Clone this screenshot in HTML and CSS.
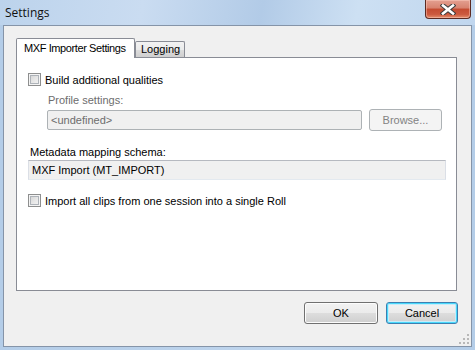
FILE: index.html
```html
<!DOCTYPE html>
<html lang="en">

<head>
    <meta charset="UTF-8">
    <title>Settings</title>
    <link rel="stylesheet" href="styles.css">
</head>

<body>
    <div class="window">
        <div class="titlebar">
            <span class="title">Settings</span>
            <button class="close" title="Close">
                <svg width="16" height="11" viewBox="0 0 16 11">
                    <path d="M3 1.5 L13 9.5 M13 1.5 L3 9.5" stroke="#3b3b3b" stroke-width="4.6" stroke-linecap="square" fill="none"/>
                    <path d="M3 1.5 L13 9.5 M13 1.5 L3 9.5" stroke="#fff" stroke-width="2.6" stroke-linecap="square" fill="none"/>
                </svg>
            </button>
        </div>
        <div class="client">
            <div class="tabs">
                <div class="tab active">MXF Importer Settings</div>
                <div class="tab">Logging</div>
            </div>
            <div class="panel">
                <label class="check">
                    <input type="checkbox">
                    <span>Build additional qualities</span>
                </label>
                <div class="label muted indent">Profile settings:</div>
                <div class="profile_row">
                    <div class="textbox disabled">&lt;undefined&gt;</div>
                    <button class="btn" disabled>Browse...</button>
                </div>
                <div class="label schema_label">Metadata mapping schema:</div>
                <div class="textbox readonly">MXF Import (MT_IMPORT)</div>
                <label class="check check_roll">
                    <input type="checkbox">
                    <span>Import all clips from one session into a single Roll</span>
                </label>
            </div>
            <div class="actions">
                <button class="btn ok">OK</button>
                <button class="btn cancel">Cancel</button>
            </div>
            <svg class="grip" width="10" height="10" viewBox="0 0 10 10">
                <g fill="#b8b8b8">
                    <rect x="8" y="0" width="2" height="2"/>
                    <rect x="4" y="4" width="2" height="2"/>
                    <rect x="8" y="4" width="2" height="2"/>
                    <rect x="0" y="8" width="2" height="2"/>
                    <rect x="4" y="8" width="2" height="2"/>
                    <rect x="8" y="8" width="2" height="2"/>
                </g>
            </svg>
        </div>
    </div>
</body>

</html>
```

FILE: styles.css
```css
* {
    margin: 0;
    padding: 0;
    box-sizing: border-box;
}

body {
    width: 475px;
    height: 350px;
    overflow: hidden;
    font-family: "Liberation Sans", Arial, sans-serif;
    font-size: 11px;
    color: #000;
}

.window {
    width: 475px;
    height: 350px;
    display: flex;
    flex-direction: column;
    padding: 0 3px 3px 3px;
    background: linear-gradient(90deg, #b4cde8 0%, #bfd5ed 60%, #b4cde8 100%);
}

/* title bar */
.titlebar {
    height: 25px;
    display: flex;
    align-items: flex-start;
    margin: 0 -3px;
    padding: 0 4px 0 5px;
    background: linear-gradient(100deg, #bcd3ec 0%, #cadcf1 30%, #b2cbe7 55%, #cde0f3 75%, #c0d6ee 100%);
}

.titlebar .title {
    font-family: "Open Sans", "Noto Sans", sans-serif;
    font-size: 12px;
    line-height: 25px;
    color: #111;
}

.titlebar .close {
    margin-left: auto;
    width: 46px;
    height: 19px;
    border: 1px solid #5b2a22;
    border-top: 0;
    border-radius: 0 0 4px 4px;
    background: linear-gradient(#e3a091 0%, #d7826f 45%, #c44b31 50%, #cc5a3f 80%, #e58f6d 100%);
    box-shadow: inset 0 0 0 1px rgba(255, 210, 200, 0.45);
    display: flex;
    align-items: center;
    justify-content: center;
}

.titlebar .close svg {
    display: block;
}

/* client area */
.client {
    flex: 1;
    position: relative;
    display: flex;
    flex-direction: column;
    padding: 12px 13px 22px 12px;
    background: #f0f0f0;
    border: 1px solid #8594a8;
}

.tabs {
    display: flex;
    align-items: flex-end;
    height: 19px;
}

.tab {
    height: 16px;
    line-height: 15px;
    padding: 0 4px 0 5px;
    white-space: nowrap;
    border: 1px solid #898c95;
    border-bottom: 0;
    background: linear-gradient(#f2f2f2 0%, #ebebeb 50%, #dddddd 51%, #cfcfcf 100%);
    border-radius: 2px 2px 0 0;
}

.tab.active {
    position: relative;
    z-index: 1;
    width: 119px;
    height: 20px;
    line-height: 18px;
    margin-bottom: -1px;
    padding: 0 0 0 7px;
    letter-spacing: -0.4px;
    background: #fff;
}

.panel {
    height: 234px;
    margin-right: 1px;
    padding: 15px 10px 0 11px;
    background: #fff;
    border: 1px solid #898c95;
    display: flex;
    flex-direction: column;
}

.check {
    display: flex;
    align-items: center;
    height: 13px;
}

.check input {
    appearance: none;
    width: 13px;
    height: 13px;
    margin-right: 4px;
    border: 1px solid #8e8f8f;
    background: linear-gradient(135deg, #cfcfcf 0%, #e6e6e6 50%, #f7f7f7 100%);
    box-shadow: inset 0 0 0 1px #f4f4f4, inset 0 0 0 2px #aeb3b9;
}

.label {
    height: 13px;
    line-height: 13px;
}

.muted {
    color: #6d6d6d;
}

.indent {
    margin-top: 8px;
    margin-left: 20px;
}

.profile_row {
    display: flex;
    align-items: center;
    height: 22px;
    margin-top: 2px;
    margin-left: 19px;
}

.textbox {
    height: 20px;
    line-height: 18px;
    padding-left: 3px;
    border: 1px solid #abadb3;
    border-radius: 2px;
    background: #f0f0f0;
}

.textbox.disabled {
    width: 315px;
    color: #6d6d6d;
    border-color: #adb2b5;
}

.schema_label {
    margin-top: 15px;
    margin-left: 2px;
}

.textbox.readonly {
    width: 418px;
    margin-top: 1px;
    border-color: #b6b9c0 #dbdfe6 #e3e9ef #dbdfe6;
    border-radius: 0;
}

.check_roll {
    margin-top: 14px;
}

/* buttons */
.btn {
    height: 22px;
    font-family: "Liberation Sans", Arial, sans-serif;
    font-size: 11px;
    color: #000;
    border: 1px solid #707070;
    border-radius: 3px;
    background: linear-gradient(#f2f2f2 0%, #ebebeb 50%, #dddddd 51%, #cfcfcf 100%);
    box-shadow: inset 0 0 0 1px #fcfcfc;
}

.btn:disabled {
    width: 73px;
    margin-left: 7px;
    color: #838383;
    border-color: #adb2b5;
    background: #f4f4f4;
    box-shadow: none;
}

.actions {
    display: flex;
    justify-content: flex-end;
    gap: 8px;
    margin-top: 11px;
}

.btn.ok {
    width: 74px;
}

.btn.cancel {
    width: 72px;
    border-color: #3c7fb1;
    box-shadow: inset 0 0 0 1px #48d8fb, inset 0 0 0 2px #c6ecfa;
}

/* resize grip in the corner */
.grip {
    position: absolute;
    right: 2px;
    bottom: 2px;
}
```
